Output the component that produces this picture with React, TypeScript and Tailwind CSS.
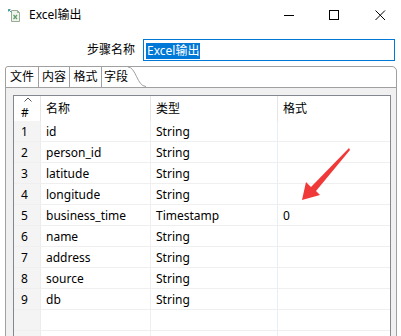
import React from "react";

const rows: [string, string, string, string][] = [
  ["1", "id", "String", ""],
  ["2", "person_id", "String", ""],
  ["3", "latitude", "String", ""],
  ["4", "longitude", "String", ""],
  ["5", "business_time", "Timestamp", "0"],
  ["6", "name", "String", ""],
  ["7", "address", "String", ""],
  ["8", "source", "String", ""],
  ["9", "db", "String", ""],
  ["", "", "", ""],
  ["", "", "", ""],
];

function AppIcon() {
  return (
    <svg width="13" height="13" viewBox="0 0 13 13">
      <path d="M3.5 1.5 H9.5 L11.5 3.5 V12.5 H3.5 Z" fill="#eef3ec" stroke="#9aab95" />
      <path d="M9.5 1.5 V3.5 H11.5" fill="none" stroke="#9aab95" />
      <path d="M5.5 6 L9 10 M9 6 L5.5 10" stroke="#5f9e6e" strokeWidth="1.2" />
      <path d="M0.5 0.5 L3.5 3.5 M0.5 0.5 H2.5 M0.5 0.5 V2.5" stroke="#4a9aa8" strokeWidth="1" />
    </svg>
  );
}

export default function App() {
  return (
    <div className="relative w-[401px] h-[336px] overflow-hidden bg-white text-black font-['Noto_Sans','Noto_Sans_CJK_SC',sans-serif] text-[12px]">
      {/* Title bar */}
      <div className="flex h-[30px] items-center">
        <div className="ml-[8px] flex items-center">
          <AppIcon />
        </div>
        <span className="ml-[8px] leading-none">Excel输出</span>
        <div className="ml-auto flex items-center pr-[15px]">
          <svg width="11" height="11" viewBox="0 0 11 11">
            <path d="M0 5.5 H10" stroke="#000" strokeWidth="1" />
          </svg>
          <svg width="11" height="11" viewBox="0 0 11 11" className="ml-[34px]">
            <rect x="0.5" y="0.5" width="9" height="9" fill="none" stroke="#000" strokeWidth="1" />
          </svg>
          <svg width="11" height="11" viewBox="0 0 11 11" className="ml-[35px]">
            <path d="M0.5 0.5 L10 10 M10 0.5 L0.5 10" stroke="#000" strokeWidth="1" />
          </svg>
        </div>
      </div>

      {/* Step name row */}
      <div className="mt-[9px] flex h-[22px] items-center justify-end pr-[6px]">
        <span className="mr-[8px] leading-none">步骤名称</span>
        <div className="h-[22px] w-[252px] border border-[#0078d7] pl-[2px] pt-[2px]">
          <span className="inline-block h-[16px] bg-[#0078d7] px-[1px] leading-[16px] text-white">Excel输出</span>
        </div>
      </div>

      {/* Tab folder */}
      <div className="ml-[5px] mt-[5px] h-[300px] w-[392px] rounded-tl-[3px] rounded-tr-[5px] border border-[#a0a0a0] bg-[#f0f0f0]">
        <div className="flex h-[20px] rounded-tl-[3px] rounded-tr-[5px] bg-white">
          <div className="flex w-[33px] items-center justify-center border-r border-[#a0a0a0] leading-none">文件</div>
          <div className="flex w-[31px] items-center justify-center border-r border-[#a0a0a0] leading-none">内容</div>
          <div className="flex w-[32px] items-center justify-center border-r border-[#a0a0a0] leading-none">格式</div>
          <div className="flex items-center pl-[2px] leading-none">字段</div>
          <svg width="18" height="20" viewBox="0 0 18 20" className="shrink-0">
            <path d="M0 0 C 8 0, 9 19.5, 18 19.5" fill="none" stroke="#a0a0a0" strokeWidth="1" />
          </svg>
        </div>
        <div className="border-t border-[#a0a0a0] pl-[7px] pr-[5px] pt-[7px]">
          <div className="h-[260px] w-[378px] border border-[#828790] bg-white">
            {/* Header */}
            <div className="flex h-[25px] items-center">
              <div className="relative flex h-full w-[27px] items-center border-r border-[#e5e5e5] pl-[7px]">
                <svg width="8" height="5" viewBox="0 0 8 5" className="absolute left-[10px] top-[1px]">
                  <path d="M0.5 4.5 L4 1 L7.5 4.5" fill="none" stroke="#555" strokeWidth="1" />
                </svg>
                <span className="mt-[8px] leading-none">#</span>
              </div>
              <div className="flex h-full w-[110px] items-center border-r border-[#e5e5e5] pl-[5px] pt-[1px] leading-none">名称</div>
              <div className="flex h-full w-[127px] items-center border-r border-[#e5e5e5] pl-[5px] pt-[1px] leading-none">类型</div>
              <div className="flex h-full flex-1 items-center pl-[5px] pt-[1px] leading-none">格式</div>
            </div>
            {rows.map((r, i) => (
              <div key={i} className="flex h-[21px] border-b border-[#efefef]">
                <div className="flex w-[27px] items-center border-r border-[#ececec] bg-[#f4f4f4] pl-[7px] pt-[2px] leading-none">{r[0]}</div>
                <div className="flex w-[110px] items-center border-r border-[#efefef] pl-[5px] pt-[2px] leading-none">{r[1]}</div>
                <div className="flex w-[127px] items-center border-r border-[#e6eef8] pl-[5px] pt-[2px] leading-none">{r[2]}</div>
                <div className="flex flex-1 items-center pl-[5px] pt-[2px] leading-none">{r[3]}</div>
              </div>
            ))}
          </div>
        </div>
      </div>

      {/* Red arrow annotation */}
      <svg className="pointer-events-none absolute left-0 top-0" width="401" height="336" viewBox="0 0 401 336">
        <polygon
          points="349,148 350,150 316,191 320,195 302,200 306,182 311,187"
          fill="#f03a3a"
        />
      </svg>
    </div>
  );
}
